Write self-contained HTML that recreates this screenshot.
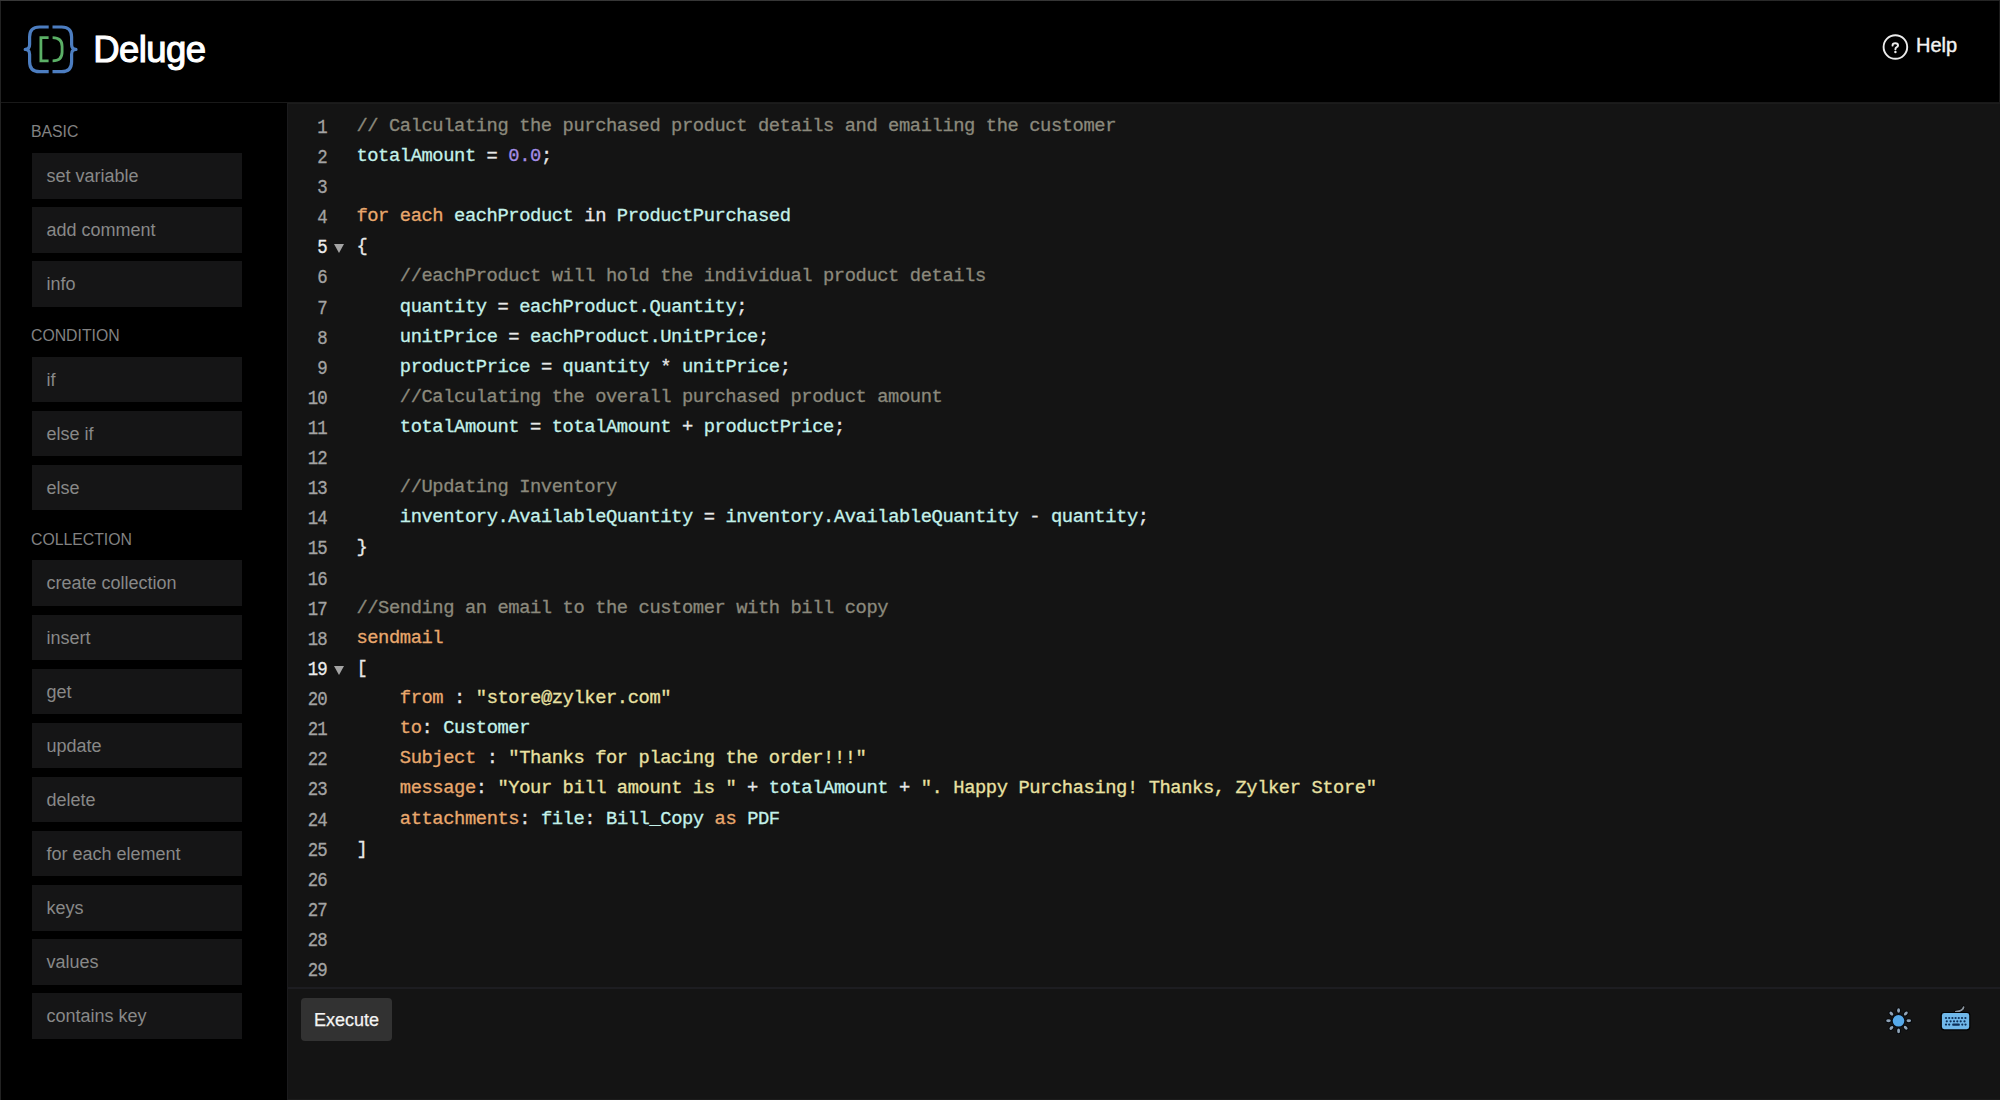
<!DOCTYPE html>
<html><head><meta charset="utf-8">
<style>
*{margin:0;padding:0;box-sizing:border-box}
html,body{width:2000px;height:1100px;overflow:hidden;background:#000}
body{position:relative;font-family:"Liberation Sans",sans-serif}
#hdr{position:absolute;left:0;top:0;width:2000px;height:103px;background:#000;border-bottom:1px solid #191919}
#tb{position:absolute;left:0;top:0;width:2000px;height:1px;background:linear-gradient(90deg,#383838 0%,#353535 60%,#242424 100%);z-index:6}
#lb{position:absolute;left:0;top:0;width:1px;height:1100px;background:#222;z-index:5}
#logo{position:absolute;left:20px;top:22px}
#title{position:absolute;left:93.3px;top:29px;font-size:36.5px;color:#fff;line-height:42px;letter-spacing:-0.6px;-webkit-text-stroke:1.1px #fff}
#help{position:absolute;left:1880px;top:32px}
#helpt{position:absolute;left:1916px;top:32.5px;font-size:20px;color:#f2f2f2;line-height:24px;-webkit-text-stroke:0.4px #f2f2f2}
#side{position:absolute;left:0;top:0;width:287px;height:1100px}
.sh{position:absolute;left:31px;font-size:15.8px;color:#828282;line-height:18px}
.sb{position:absolute;left:32.4px;width:209.4px;height:45.6px;background:#151516;color:#888888;font-size:18px;line-height:47.4px;padding-left:14px}
#ed{position:absolute;left:287px;top:103px;width:1713px;height:997px;background:#141414;border-left:1px solid #1b1b1d;border-top:1px solid #1c1c1c}
#sep{position:absolute;left:288px;top:987px;width:1712px;height:2px;background:#1d1d21}
.ln{position:absolute;left:277.9px;-webkit-text-stroke:0.3px currentColor;width:48.6px;transform:scaleX(0.87);transform-origin:100% 50%;text-align:right;font-family:"Liberation Mono",monospace;font-size:20px;letter-spacing:-1.154px;color:#a3a3a3;height:30px;line-height:30px}
.cl{position:absolute;left:356.4px;-webkit-text-stroke:0.3px currentColor;white-space:pre;font-family:"Liberation Mono",monospace;font-size:18.8px;letter-spacing:-0.419px;color:#e6e6e6;height:30px;line-height:30px}
.c{color:#8b897c}.i{color:#c3f1ea}.k{color:#e9a86d}.s{color:#e9e1a2}.n{color:#a48de6}.o{color:#e8e8e8}
.fold{position:absolute;left:333.8px;width:0;height:0;border-left:5px solid transparent;border-right:5px solid transparent;border-top:9px solid #a4a4a4}
#exec{position:absolute;left:301px;top:998px;width:91px;height:43px;background:#323232;border-radius:4px;color:#f4f4f4;font-size:18px;line-height:44.5px;text-align:center;-webkit-text-stroke:0.25px #f4f4f4}
#sun{position:absolute;left:1884px;top:1006px}
#kbd{position:absolute;left:1940px;top:1004px}

.act{color:#ececec}
#bb{position:absolute;left:288px;top:1099px;width:1712px;height:1px;background:#1c1c1c}
#rb{position:absolute;left:1999px;top:1px;width:1px;height:101px;background:#1c1c1c}

</style></head><body>
<div id="hdr"></div>
<div id="lb"></div>
<div id="tb"></div>
<div id="rb"></div>
<svg id="logo" width="100" height="100" viewBox="0 0 100 100" style="position:absolute;left:0;top:0">
<g fill="none" stroke="#4c7dc0" stroke-width="3.2" stroke-linejoin="round">
<path d="M48.7 27 H39.5 Q29.6 27 29.6 37 V44.5 Q29.6 49.4 25.2 49.4 Q29.6 49.4 29.6 54.3 V61.7 Q29.6 71.7 39.5 71.7 H48.7"/>
<path d="M52.5 27 H61.7 Q71.6 27 71.6 37 V44.5 Q71.6 49.4 76.0 49.4 Q71.6 49.4 71.6 54.3 V61.7 Q71.6 71.7 61.7 71.7 H52.5"/>
</g>
<g fill="none" stroke="#5bb066" stroke-width="2.8">
<path d="M48.6 37.6 H40.9 V60.8 H48.6"/>
<path d="M52.6 37.6 Q62.1 37.6 62.1 46.5 V52 Q62.1 60.8 52.6 60.8"/>
</g>
</svg>

<div id="title">Deluge</div>
<div id="helpt">Help</div>
<div id="side">
<div class="sh" style="top:123.40px">BASIC</div>
<div class="sb" style="top:153.00px">set variable</div>
<div class="sb" style="top:207.10px">add comment</div>
<div class="sb" style="top:261.20px">info</div>
<div class="sh" style="top:327.40px">CONDITION</div>
<div class="sb" style="top:356.70px">if</div>
<div class="sb" style="top:410.80px">else if</div>
<div class="sb" style="top:464.90px">else</div>
<div class="sh" style="top:531.00px">COLLECTION</div>
<div class="sb" style="top:560.40px">create collection</div>
<div class="sb" style="top:614.50px">insert</div>
<div class="sb" style="top:668.60px">get</div>
<div class="sb" style="top:722.70px">update</div>
<div class="sb" style="top:776.80px">delete</div>
<div class="sb" style="top:830.90px">for each element</div>
<div class="sb" style="top:885.00px">keys</div>
<div class="sb" style="top:939.10px">values</div>
<div class="sb" style="top:993.20px">contains key</div>
</div>
<div id="ed"></div>
<div id="sep"></div>
<div class="ln" style="top:112.80px">1</div>
<div class="cl" style="top:110.80px"><span class="c">// Calculating the purchased product details and emailing the customer</span></div>
<div class="ln" style="top:142.92px">2</div>
<div class="cl" style="top:140.92px"><span class="i">totalAmount</span><span class="o"> = </span><span class="n">0.0</span><span class="o">;</span></div>
<div class="ln" style="top:173.04px">3</div>
<div class="ln" style="top:203.15px">4</div>
<div class="cl" style="top:201.15px"><span class="k">for each </span><span class="i">eachProduct</span><span class="o"> in </span><span class="i">ProductPurchased</span></div>
<div class="ln act" style="top:233.27px">5</div>
<div class="cl" style="top:231.27px"><span class="o">{</span></div>
<div class="fold" style="top:244.37px"></div>
<div class="ln" style="top:263.39px">6</div>
<div class="cl" style="top:261.39px"><span class="c">    //eachProduct will hold the individual product details</span></div>
<div class="ln" style="top:293.51px">7</div>
<div class="cl" style="top:291.51px"><span class="o">    </span><span class="i">quantity</span><span class="o"> = </span><span class="i">eachProduct.Quantity</span><span class="o">;</span></div>
<div class="ln" style="top:323.63px">8</div>
<div class="cl" style="top:321.63px"><span class="o">    </span><span class="i">unitPrice</span><span class="o"> = </span><span class="i">eachProduct.UnitPrice</span><span class="o">;</span></div>
<div class="ln" style="top:353.74px">9</div>
<div class="cl" style="top:351.74px"><span class="o">    </span><span class="i">productPrice</span><span class="o"> = </span><span class="i">quantity</span><span class="o"> * </span><span class="i">unitPrice</span><span class="o">;</span></div>
<div class="ln" style="top:383.86px">10</div>
<div class="cl" style="top:381.86px"><span class="c">    //Calculating the overall purchased product amount</span></div>
<div class="ln" style="top:413.98px">11</div>
<div class="cl" style="top:411.98px"><span class="o">    </span><span class="i">totalAmount</span><span class="o"> = </span><span class="i">totalAmount</span><span class="o"> + </span><span class="i">productPrice</span><span class="o">;</span></div>
<div class="ln" style="top:444.10px">12</div>
<div class="ln" style="top:474.22px">13</div>
<div class="cl" style="top:472.22px"><span class="c">    //Updating Inventory</span></div>
<div class="ln" style="top:504.33px">14</div>
<div class="cl" style="top:502.33px"><span class="o">    </span><span class="i">inventory.AvailableQuantity</span><span class="o"> = </span><span class="i">inventory.AvailableQuantity</span><span class="o"> - </span><span class="i">quantity</span><span class="o">;</span></div>
<div class="ln" style="top:534.45px">15</div>
<div class="cl" style="top:532.45px"><span class="o">}</span></div>
<div class="ln" style="top:564.57px">16</div>
<div class="ln" style="top:594.69px">17</div>
<div class="cl" style="top:592.69px"><span class="c">//Sending an email to the customer with bill copy</span></div>
<div class="ln" style="top:624.81px">18</div>
<div class="cl" style="top:622.81px"><span class="k">sendmail</span></div>
<div class="ln act" style="top:654.92px">19</div>
<div class="cl" style="top:652.92px"><span class="o">[</span></div>
<div class="fold" style="top:666.02px"></div>
<div class="ln" style="top:685.04px">20</div>
<div class="cl" style="top:683.04px"><span class="o">    </span><span class="k">from</span><span class="o"> : </span><span class="s">&quot;store@zylker.com&quot;</span></div>
<div class="ln" style="top:715.16px">21</div>
<div class="cl" style="top:713.16px"><span class="o">    </span><span class="k">to</span><span class="o">: </span><span class="i">Customer</span></div>
<div class="ln" style="top:745.28px">22</div>
<div class="cl" style="top:743.28px"><span class="o">    </span><span class="k">Subject</span><span class="o"> : </span><span class="s">&quot;Thanks for placing the order!!!&quot;</span></div>
<div class="ln" style="top:775.40px">23</div>
<div class="cl" style="top:773.40px"><span class="o">    </span><span class="k">message</span><span class="o">: </span><span class="s">&quot;Your bill amount is &quot;</span><span class="o"> + </span><span class="i">totalAmount</span><span class="o"> + </span><span class="s">&quot;. Happy Purchasing! Thanks, Zylker Store&quot;</span></div>
<div class="ln" style="top:805.51px">24</div>
<div class="cl" style="top:803.51px"><span class="o">    </span><span class="k">attachments</span><span class="o">: </span><span class="i">file</span><span class="o">: </span><span class="i">Bill_Copy</span><span class="k"> as </span><span class="i">PDF</span></div>
<div class="ln" style="top:835.63px">25</div>
<div class="cl" style="top:833.63px"><span class="o">]</span></div>
<div class="ln" style="top:865.75px">26</div>
<div class="ln" style="top:895.87px">27</div>
<div class="ln" style="top:925.99px">28</div>
<div class="ln" style="top:956.10px">29</div>
<div id="exec">Execute</div>
<div id="bb"></div>
<svg width="40" height="40" viewBox="1875 27 40 40" style="position:absolute;left:1875px;top:27px">
<circle cx="1895.4" cy="47" r="11.8" fill="none" stroke="#ececec" stroke-width="1.9"/>
<path d="M1892.6 45.6 Q1892.5 43.2 1895.3 43.2 Q1898 43.2 1898 45.4 Q1898 46.6 1896.7 47.2 Q1895.4 47.8 1895.4 49.3" fill="none" stroke="#ececec" stroke-width="2" stroke-linecap="round"/><circle cx="1895.4" cy="52" r="1.2" fill="#ececec"/>
</svg>
<svg width="40" height="40" viewBox="1878 1000 40 40" style="position:absolute;left:1878px;top:1000px">
<ellipse cx="1898.6" cy="1010.5" rx="2.3" ry="3.1" fill="#03070c" transform="rotate(0 1898.6 1010.5)"/><ellipse cx="1898.6" cy="1030.9" rx="2.3" ry="3.1" fill="#03070c" transform="rotate(0 1898.6 1030.9)"/><ellipse cx="1888.5" cy="1020.8" rx="2.3" ry="3.1" fill="#03070c" transform="rotate(90 1888.5 1020.8)"/><ellipse cx="1908.8" cy="1020.8" rx="2.3" ry="3.1" fill="#03070c" transform="rotate(90 1908.8 1020.8)"/><ellipse cx="1891.4" cy="1013.6" rx="2.3" ry="3.1" fill="#03070c" transform="rotate(-45 1891.4 1013.6)"/><ellipse cx="1905.8" cy="1013.5" rx="2.3" ry="3.1" fill="#03070c" transform="rotate(45 1905.8 1013.5)"/><ellipse cx="1891.4" cy="1027.9" rx="2.3" ry="3.1" fill="#03070c" transform="rotate(45 1891.4 1027.9)"/><ellipse cx="1905.7" cy="1027.7" rx="2.3" ry="3.1" fill="#03070c" transform="rotate(-45 1905.7 1027.7)"/>
<circle cx="1898.5" cy="1020.8" r="6.6" fill="#030a14"/>
<ellipse cx="1898.6" cy="1010.5" rx="1.45" ry="2.3" fill="#8fa3b6" transform="rotate(0 1898.6 1010.5)"/><ellipse cx="1898.6" cy="1030.9" rx="1.45" ry="2.3" fill="#8fa3b6" transform="rotate(0 1898.6 1030.9)"/><ellipse cx="1888.5" cy="1020.8" rx="1.45" ry="2.3" fill="#8fa3b6" transform="rotate(90 1888.5 1020.8)"/><ellipse cx="1908.8" cy="1020.8" rx="1.45" ry="2.3" fill="#8fa3b6" transform="rotate(90 1908.8 1020.8)"/><ellipse cx="1891.4" cy="1013.6" rx="1.45" ry="2.3" fill="#8fa3b6" transform="rotate(-45 1891.4 1013.6)"/><ellipse cx="1905.8" cy="1013.5" rx="1.45" ry="2.3" fill="#8fa3b6" transform="rotate(45 1905.8 1013.5)"/><ellipse cx="1891.4" cy="1027.9" rx="1.45" ry="2.3" fill="#8fa3b6" transform="rotate(45 1891.4 1027.9)"/><ellipse cx="1905.7" cy="1027.7" rx="1.45" ry="2.3" fill="#8fa3b6" transform="rotate(-45 1905.7 1027.7)"/>
<circle cx="1898.5" cy="1020.8" r="5.8" fill="#55a9ea"/>
</svg>
<svg width="40" height="40" viewBox="1936 1000 40 40" style="position:absolute;left:1936px;top:1000px">
<path d="M1963.6 1007.2 Q1963.2 1010.9 1955.9 1011.7" fill="none" stroke="#000" stroke-width="3.2" stroke-linecap="round"/>
<path d="M1963.6 1007.2 Q1963.2 1010.9 1955.9 1011.7" fill="none" stroke="#8c969f" stroke-width="1.8" stroke-linecap="round"/>
<rect x="1940.6" y="1011.9" width="29.8" height="18.5" rx="3.4" fill="#000"/><rect x="1941.9" y="1013.1" width="27.3" height="16.1" rx="2.4" fill="#70b8ea"/>
<g fill="#0c2f58">
<circle cx="1946" cy="1018" r="1.1"/><circle cx="1949.2" cy="1018" r="1.1"/><circle cx="1952.4" cy="1018" r="1.1"/><circle cx="1955.6" cy="1018" r="1.1"/><circle cx="1958.8" cy="1018" r="1.1"/><circle cx="1962" cy="1018" r="1.1"/><circle cx="1965.4" cy="1018" r="1.1"/>
<circle cx="1946.8" cy="1021.3" r="1.1"/><circle cx="1950.6" cy="1021.3" r="1.1"/><circle cx="1954" cy="1021.3" r="1.1"/><circle cx="1957.3" cy="1021.3" r="1.1"/><circle cx="1960.7" cy="1021.3" r="1.1"/><circle cx="1964.5" cy="1021.3" r="1.1"/>
<circle cx="1946" cy="1024.6" r="1.1"/><circle cx="1949.2" cy="1024.6" r="1.1"/><rect x="1952.2" y="1023.5" width="7.6" height="2.2" rx="0.8"/><circle cx="1962.3" cy="1024.6" r="1.1"/><circle cx="1965.5" cy="1024.6" r="1.1"/>
</g>
</svg>

</body></html>
